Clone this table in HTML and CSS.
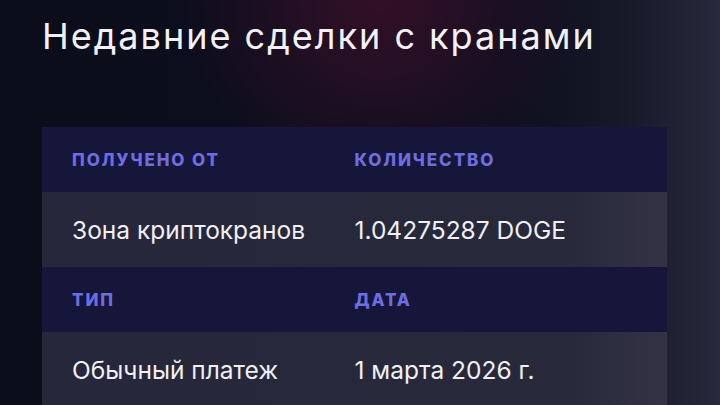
FILE: index.html
```html
<!DOCTYPE html>
<html lang="ru">
<head>
<meta charset="utf-8">
<link rel="stylesheet" href="styles.css">
</head>
<body>
<main class="page">
  <h1 class="title">Недавние сделки с кранами</h1>
  <section class="table">
    <div class="row head">
      <div class="cell">Получено от</div>
      <div class="cell">Количество</div>
    </div>
    <div class="row data">
      <div class="cell">Зона криптокранов</div>
      <div class="cell">1.04275287 DOGE</div>
    </div>
    <div class="row head">
      <div class="cell">Тип</div>
      <div class="cell">Дата</div>
    </div>
    <div class="row data">
      <div class="cell">Обычный платеж</div>
      <div class="cell">1 марта 2026 г.</div>
    </div>
  </section>
</main>
</body>
</html>
```
FILE: styles.css
```css
html, body {
  margin: 0;
  height: 100%;
}
body {
  background:
    radial-gradient(ellipse 200px 190px at 380px 0px, rgba(90, 16, 48, 0.5), rgba(90, 16, 48, 0) 100%),
    linear-gradient(90deg, #0b0d1b 0%, #0d0f1f 70%, #161727 86%, #28293c 100%);
  font-family: Inter, "Noto Sans", sans-serif;
  overflow: hidden;
}
.page {
  padding: 14px 42px 0 42px;
}
.title {
  margin: 0;
  font-family: Inter, "Noto Sans", sans-serif;
  font-weight: 400;
  font-size: 36px;
  line-height: 44px;
  letter-spacing: 2px;
  color: #f2f2f6;
}
.table {
  margin-top: 69px;
  width: 625px;
}
.row {
  display: grid;
  grid-template-columns: 1fr 1fr;
  padding: 0 30px;
  align-items: center;
}
.row.head {
  height: 65px;
  background: #15163a;
}
.row.data {
  height: 75px;
  background: linear-gradient(90deg, #26273a 0%, #28293b 85%, #333345 100%);
}
.head .cell {
  font-size: 17px;
  font-weight: 800;
  letter-spacing: 1.9px;
  text-transform: uppercase;
  color: #6e6ee0;
}
.data .cell {
  font-size: 24.5px;
  font-weight: 400;
  letter-spacing: 0;
  color: #f0f0f4;
}
```
